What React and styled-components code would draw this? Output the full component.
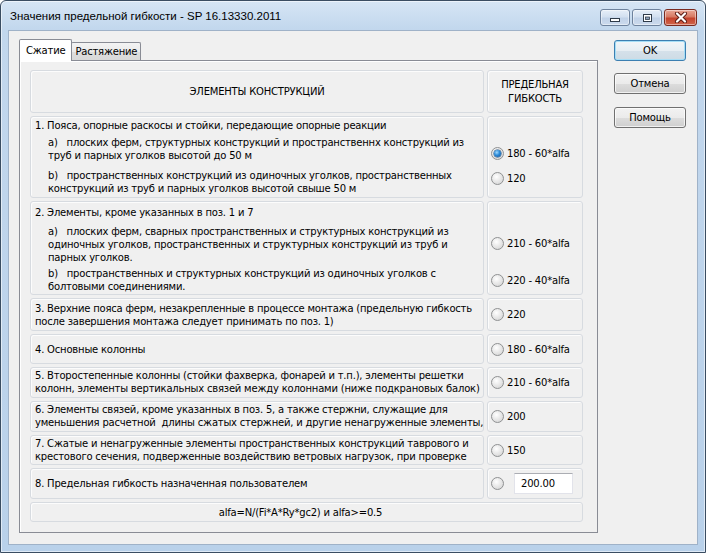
import React from 'react';
import styled, { createGlobalStyle } from 'styled-components';

const GlobalStyle = createGlobalStyle`
  html, body {
    margin: 0;
    padding: 0;
    background: #ffffff;
  }
  body {
    font-family: "DejaVu Sans", sans-serif;
    font-size: 10px;
    letter-spacing: -0.2px;
    color: #000;
  }
`;

const Window = styled.div`
  width: 706px;
  height: 553px;
  box-sizing: border-box;
  border: 1px solid #3a4d62;
  border-radius: 6px 6px 0 0;
  background: linear-gradient(180deg, #d6e5f5 0%, #c2d7ed 28px, #b9d1ea 100%);
  box-shadow: inset 0 0 0 1px rgba(255, 255, 255, 0.55);
  display: flex;
  flex-direction: column;
`;

const TitleBar = styled.div`
  height: 29px;
  display: flex;
  align-items: flex-start;
  padding: 0 8px 0 9px;
`;

const Title = styled.div`
  flex: 1;
  font-family: "Liberation Sans", sans-serif;
  font-size: 11.5px;
  letter-spacing: 0;
  line-height: 15px;
  padding-top: 8px;
  color: #000;
`;

const Controls = styled.div`
  display: flex;
  gap: 2px;
  padding-top: 8px;
`;

const CaptionButton = styled.div`
  width: ${(p) => p.$w}px;
  height: 17px;
  box-sizing: border-box;
  border: 1px solid ${(p) => (p.$close ? '#7a2a1f' : '#6e829d')};
  border-radius: 3px;
  background: ${(p) =>
    p.$close
      ? 'linear-gradient(180deg, #e9a897 0%, #d77a63 45%, #c4432c 55%, #d0654b 100%)'
      : 'linear-gradient(180deg, #e6eef8 0%, #d3e0f0 45%, #c1d2e8 55%, #cbdaed 100%)'};
  box-shadow: inset 0 0 0 1px rgba(255, 255, 255, 0.45);
  display: flex;
  align-items: center;
  justify-content: center;
`;

const Client = styled.div`
  flex: 1;
  margin: 0 7px 7px 7px;
  border: 1px solid #9fb2c8;
  background: #f0f0f0;
  display: flex;
  padding: 8px 11px 11px 10px;
  gap: 16px;
`;

const TabArea = styled.div`
  width: 579px;
  display: flex;
  flex-direction: column;
`;

const TabStrip = styled.div`
  height: 21px;
  display: flex;
  align-items: flex-end;
`;

const Tab = styled.div`
  box-sizing: border-box;
  height: ${(p) => (p.$active ? 22 : 18)}px;
  margin-bottom: ${(p) => (p.$active ? -1 : 0)}px;
  margin-left: ${(p) => (p.$active ? 0 : -1)}px;
  padding: 0 ${(p) => (p.$active ? 6 : 3)}px;
  border: 1px solid #898c95;
  border-bottom: none;
  border-radius: 2px 2px 0 0;
  background: ${(p) =>
    p.$active ? '#ffffff' : 'linear-gradient(180deg, #f3f3f3 0%, #ebebeb 50%, #dddddd 51%, #d9d9d9 100%)'};
  position: relative;
  z-index: ${(p) => (p.$active ? 1 : 0)};
  display: flex;
  align-items: center;
  line-height: 13px;
`;

const Panel = styled.div`
  flex: 1;
  border: 1px solid #898c95;
  background: #f0f0f0;
  box-shadow: inset 1px 1px 0 #ffffff;
  padding: 9px 14px 0 10px;
`;

const Table = styled.div`
  display: grid;
  grid-template-columns: 454px 96px;
  grid-template-rows: 43px 82px 94px 33px 30px 31px 31px 30px 31px 20px;
  gap: 3px;
`;

const Cell = styled.div`
  box-sizing: border-box;
  border: 1px solid #d7dbe0;
  border-radius: 3px;
  box-shadow: inset 1px 1px 0 rgba(255, 255, 255, 0.8);
  overflow: hidden;
  display: flex;
  flex-direction: column;
`;

const HeadCell = styled(Cell)`
  align-items: center;
  justify-content: center;
  text-align: center;
  line-height: 14px;
`;

const TextCell = styled(Cell)`
  justify-content: ${(p) => (p.$top != null ? 'flex-start' : 'center')};
  padding: ${(p) => (p.$top != null ? p.$top : 0)}px 4px 0 4px;
`;

const ValueCell = styled(Cell)`
  justify-content: ${(p) => (p.$top != null ? 'flex-start' : 'center')};
  padding: ${(p) => (p.$top != null ? p.$top : 0)}px 0 0 3px;
  gap: ${(p) => p.$gap || 0}px;
`;

const FormulaCell = styled(Cell)`
  grid-column: 1 / span 2;
  align-items: center;
  justify-content: center;
  padding-right: 12px;
  line-height: 13px;
`;

const Line = styled.div`
  white-space: pre;
  line-height: 13px;
  height: 13px;
`;

const Sub = styled.div`
  margin-left: 13px;
  margin-top: ${(p) => p.$mt}px;
`;

const Option = styled.div`
  display: flex;
  align-items: center;
  gap: 3px;
  height: 13px;
  line-height: 13px;
  white-space: nowrap;
`;

const Radio = styled.span`
  width: 13px;
  height: 13px;
  box-sizing: border-box;
  border-radius: 50%;
  border: 1px solid #8f9192;
  background: radial-gradient(circle at 40% 35%, #ffffff 0%, #e9e9e9 45%, #cfcfcf 100%);
  display: flex;
  align-items: center;
  justify-content: center;
  flex: none;

  &::after {
    content: '';
    display: ${(p) => (p.$checked ? 'block' : 'none')};
    width: 7px;
    height: 7px;
    border-radius: 50%;
    background: radial-gradient(circle at 40% 35%, #9fd9ff 0%, #2b8ad8 45%, #0e4f94 100%);
    box-shadow: 0 0 0 0.5px #1b4a7a;
  }
`;

const UserInput = styled.input`
  width: 59px;
  height: 21px;
  box-sizing: border-box;
  margin-left: 7px;
  border: 1px solid #e2e3ea;
  border-top-color: #abadb3;
  background: #ffffff;
  font-family: "DejaVu Sans", sans-serif;
  font-size: 10px;
  letter-spacing: -0.2px;
  padding: 0 0 0 6px;
  outline: none;
  color: #000;
`;

const ButtonColumn = styled.div`
  width: 72px;
  display: flex;
  flex-direction: column;
  gap: 12px;
  padding-top: 1px;
`;

const Button = styled.button`
  height: 21px;
  box-sizing: border-box;
  border: 1px solid ${(p) => (p.$default ? '#3c7fb1' : '#707070')};
  border-radius: 3px;
  background: ${(p) =>
    p.$default
      ? 'linear-gradient(180deg, #f2f6f9 0%, #e7eef3 50%, #d5e1ea 51%, #cddbe5 100%)'
      : 'linear-gradient(180deg, #f2f2f2 0%, #ebebeb 50%, #dddddd 51%, #cfcfcf 100%)'};
  box-shadow: inset 0 0 0 1px ${(p) => (p.$default ? '#a6def6' : 'rgba(255,255,255,0.7)')};
  font-family: "DejaVu Sans", sans-serif;
  font-size: 10px;
  letter-spacing: -0.2px;
  color: #000;
  padding: 0;
  margin-top: ${(p) => p.$mt || 0}px;
`;

const rows = [
  {
    left: (
      <TextCell $top={2}>
        <Line>1. Пояса, опорные раскосы и стойки, передающие опорные реакции</Line>
        <Sub $mt={4}>
          <Line>a)   плоских ферм, структурных конструкций и пространственнх конструкций из</Line>
          <Line>труб и парных уголков высотой до 50 м</Line>
        </Sub>
        <Sub $mt={7}>
          <Line>b)   пространственных конструкций из одиночных уголков, пространственных</Line>
          <Line>конструкций из труб и парных уголков высотой свыше 50 м</Line>
        </Sub>
      </TextCell>
    ),
    values: ['180 - 60*alfa', '120'],
    checked: 0,
    top: 30,
    gap: 12,
  },
  {
    left: (
      <TextCell $top={4}>
        <Line>2. Элементы, кроме указанных в поз. 1 и 7</Line>
        <Sub $mt={6}>
          <Line>a)   плоских ферм, сварных пространственных и структурных конструкций из</Line>
          <Line>одиночных уголков, пространственных и структурных конструкций из труб и</Line>
          <Line>парных уголков.</Line>
        </Sub>
        <Sub $mt={3}>
          <Line>b)   пространственных и структурных конструкций из одиночных уголков с</Line>
          <Line>болтовыми соединениями.</Line>
        </Sub>
      </TextCell>
    ),
    values: ['210 - 60*alfa', '220 - 40*alfa'],
    top: 35,
    gap: 24,
  },
  {
    left: (
      <TextCell>
        <Line>3. Верхние пояса ферм, незакрепленные в процессе монтажа (предельную гибкость</Line>
        <Line>после завершения монтажа следует принимать по поз. 1)</Line>
      </TextCell>
    ),
    values: ['220'],
  },
  {
    left: (
      <TextCell>
        <Line>4. Основные колонны</Line>
      </TextCell>
    ),
    values: ['180 - 60*alfa'],
  },
  {
    left: (
      <TextCell $top={1}>
        <Line>5. Второстепенные колонны (стойки фахверка, фонарей и т.п.), элементы решетки</Line>
        <Line>колонн, элементы вертикальных связей между колоннами (ниже подкрановых балок)</Line>
      </TextCell>
    ),
    values: ['210 - 60*alfa'],
  },
  {
    left: (
      <TextCell $top={1}>
        <Line>6. Элементы связей, кроме указанных в поз. 5, а также стержни, служащие для</Line>
        <Line>уменьшения расчетной  длины сжатых стержней, и другие ненагруженные элементы,</Line>
      </TextCell>
    ),
    values: ['200'],
  },
  {
    left: (
      <TextCell $top={1}>
        <Line>7. Сжатые и ненагруженные элементы пространственных конструкций таврового и</Line>
        <Line>крестового сечения, подверженные воздействию ветровых нагрузок, при проверке</Line>
        <Line>гибкости в вертикальной плоскости</Line>
      </TextCell>
    ),
    values: ['150'],
  },
];

const MinGlyph = () => (
  <svg width="12" height="10" viewBox="0 0 12 10">
    <rect x="1.5" y="5.5" width="9" height="3" fill="#ffffff" stroke="#2f3b4a" strokeWidth="1" />
  </svg>
);

const MaxGlyph = () => (
  <svg width="12" height="10" viewBox="0 0 12 10">
    <rect x="2.5" y="1.5" width="8" height="7" fill="#ffffff" stroke="#2f3b4a" strokeWidth="1" />
    <rect x="4.5" y="4" width="4" height="2.5" fill="#8fa3bd" stroke="#2f3b4a" strokeWidth="0.8" />
  </svg>
);

const CloseGlyph = () => (
  <svg width="14" height="11" viewBox="0 0 14 11">
    <path d="M3 1.5 L11 9.5 M11 1.5 L3 9.5" stroke="#5a1a12" strokeWidth="4" strokeLinecap="round" />
    <path d="M3 1.5 L11 9.5 M11 1.5 L3 9.5" stroke="#ffffff" strokeWidth="2.2" strokeLinecap="round" />
  </svg>
);

export default function App() {
  return (
    <>
      <GlobalStyle />
      <Window>
        <TitleBar>
          <Title>Значения предельной гибкости - SP 16.13330.2011</Title>
          <Controls>
            <CaptionButton $w={30}>
              <MinGlyph />
            </CaptionButton>
            <CaptionButton $w={30}>
              <MaxGlyph />
            </CaptionButton>
            <CaptionButton $w={33} $close>
              <CloseGlyph />
            </CaptionButton>
          </Controls>
        </TitleBar>
        <Client>
          <TabArea>
            <TabStrip>
              <Tab $active>Сжатие</Tab>
              <Tab>Растяжение</Tab>
            </TabStrip>
            <Panel>
              <Table>
                <HeadCell>ЭЛЕМЕНТЫ КОНСТРУКЦИЙ</HeadCell>
                <HeadCell>
                  <div>ПРЕДЕЛЬНАЯ</div>
                  <div>ГИБКОСТЬ</div>
                </HeadCell>
                {rows.map((row, i) => (
                  <React.Fragment key={i}>
                    {row.left}
                    <ValueCell $top={row.top} $gap={row.gap}>
                      {row.values.map((v, j) => (
                        <Option key={v + j}>
                          <Radio $checked={row.checked === j} />
                          {v}
                        </Option>
                      ))}
                    </ValueCell>
                  </React.Fragment>
                ))}
                <TextCell>
                  <Line>8. Предельная гибкость назначенная пользователем</Line>
                </TextCell>
                <ValueCell>
                  <Option>
                    <Radio />
                    <UserInput defaultValue="200.00" />
                  </Option>
                </ValueCell>
                <FormulaCell>alfa=N/(Fi*A*Ry*gc2) и alfa&gt;=0.5</FormulaCell>
              </Table>
            </Panel>
          </TabArea>
          <ButtonColumn>
            <Button $default>OK</Button>
            <Button>Отмена</Button>
            <Button $mt={1}>Помощь</Button>
          </ButtonColumn>
        </Client>
      </Window>
    </>
  );
}
